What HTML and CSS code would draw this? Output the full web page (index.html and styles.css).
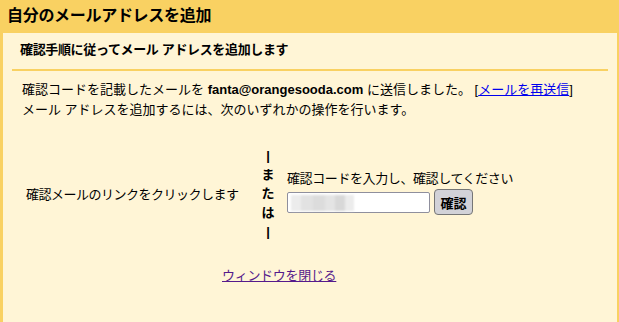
FILE: index.html
```html
<!DOCTYPE html>
<html lang="ja">
<head>
<meta charset="utf-8">
<title>自分のメールアドレスを追加</title>
<link rel="stylesheet" href="styles.css">
</head>
<body>
<div class="frame">
  <h1 class="title">自分のメールアドレスを追加</h1>
  <div class="panel">
    <div class="section">
      <h2 class="subtitle">確認手順に従ってメール アドレスを追加します</h2>
      <div class="body">
        <p class="intro">確認コードを記載したメールを <b class="email">fanta@orangesooda.com</b> に送信しました。 [<a href="#" class="link">メールを再送信</a>]<br>メール アドレスを追加するには、次のいずれかの操作を行います。</p>
        <div class="choices">
          <div class="choice-left">確認メールのリンクをクリックします</div>
          <div class="or">
            <span>|</span><span>ま</span><span>た</span><span>は</span><span>|</span>
          </div>
          <div class="choice-right">
            <div class="label">確認コードを入力し、確認してください</div>
            <div class="form">
              <div class="field"><span class="blur"></span></div>
              <button class="btn" type="button">確認</button>
            </div>
          </div>
        </div>
        <div class="close"><a href="#" class="visited">ウィンドウを閉じる</a></div>
      </div>
    </div>
  </div>
</div>
</body>
</html>
```
FILE: styles.css
```css
html, body {
  margin: 0;
  padding: 0;
}
body {
  background: #f9d162;
  font-family: "Liberation Sans", "Noto Sans CJK JP", sans-serif;
  font-size: 13px;
  color: #000;
  width: 619px;
  height: 322px;
  overflow: hidden;
}
.frame {
  height: 322px;
  display: flex;
  flex-direction: column;
}
.title {
  margin: 0;
  height: 33px;
  line-height: 31px;
  padding-left: 7px;
  font-size: 16px;
  font-weight: bold;
  letter-spacing: -0.3px;
}
.panel {
  flex: 1;
  background: #fff5d6;
  margin: 0 2px 0 3px;
}
.section {
  margin: 0 9px;
}
.subtitle {
  margin: 0;
  font-size: 13px;
  font-weight: bold;
  letter-spacing: -0.35px;
  padding: 9px 0 0 8px;
  height: 27px;
  line-height: 15px;
  border-bottom: 2px solid #f9d162;
}
.body {
  padding: 9px 0 0 10px;
}
.intro {
  margin: 0;
  line-height: 20px;
}
.email {
  letter-spacing: 0;
}
.link {
  color: #0000ee;
}
.choices {
  display: flex;
  align-items: center;
  margin-top: 18px;
  height: 110px;
}
.choice-left {
  width: 232px;
  padding-left: 4px;
  letter-spacing: -0.5px;
}
.or {
  display: flex;
  flex-direction: column;
  align-items: center;
  width: 20px;
  font-weight: bold;
  line-height: 19px;
}
.choice-right {
  padding-left: 9px;
  padding-top: 0;
}
.label {
  letter-spacing: -0.4px;
  line-height: 16px;
  margin-bottom: 2px;
}
.form {
  display: flex;
  align-items: center;
  gap: 4px;
}
.field {
  width: 141px;
  height: 19px;
  border: 1px solid #8f8f9d;
  border-radius: 2px;
  background: #fff;
  position: relative;
}
.blur {
  position: absolute;
  left: 3px;
  top: 2px;
  width: 63px;
  height: 16px;
  background:
    linear-gradient(90deg, #ececec 0 10px, #e2e2e2 10px 22px, #dcdcdc 22px 34px, #e4e4e4 34px 44px, #d8d8d8 44px 54px, #ececec 54px 63px);
  filter: blur(1px);
}
.btn {
  height: 26px;
  width: 39px;
  padding: 0;
  font-family: "Liberation Sans", "Noto Sans CJK JP", sans-serif;
  font-size: 13px;
  font-weight: bold;
  background: #d2d2d8;
  border: 1px solid #767676;
  border-radius: 4px;
  color: #000;
}
.close {
  margin-top: 17px;
  padding-left: 200px;
  letter-spacing: -0.3px;
}
.visited {
  color: #551a8b;
}
```
